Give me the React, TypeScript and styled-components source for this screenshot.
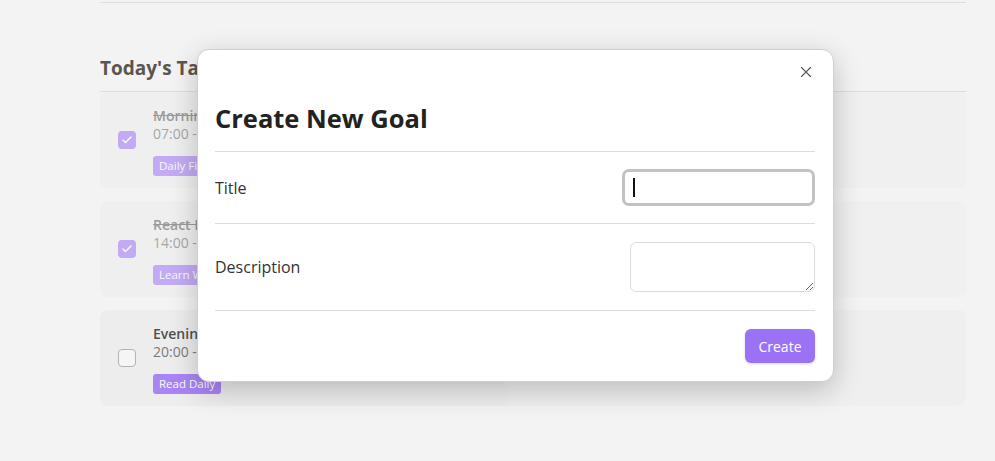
import styled, { createGlobalStyle } from "styled-components";
import { X, Check } from "lucide-react";

const GlobalStyle = createGlobalStyle`
  html, body {
    margin: 0;
    padding: 0;
    background: #f3f3f3;
    font-family: "Open Sans", "Noto Sans", sans-serif;
  }
`;

interface Task {
  title: string;
  time: string;
  tag: string;
  done: boolean;
}

const tasks: Task[] = [
  { title: "Morning Workout", time: "07:00 - 08:00", tag: "Daily Fitness", done: true },
  { title: "React Practice", time: "14:00 - 16:00", tag: "Learn Web Dev", done: true },
  { title: "Evening Reading", time: "20:00 - 21:00", tag: "Read Daily", done: false },
];

const Page = styled.div`
  width: 866px;
  padding-left: 100px;
  padding-top: 2px;
  height: 459px;
  overflow: hidden;
`;

const TopRule = styled.div`
  height: 1px;
  background: #dedede;
`;

const Section = styled.section`
  margin-top: 52px;
`;

const SectionTitle = styled.h2`
  margin: 0;
  padding-bottom: 10px;
  font-size: 19px;
  font-weight: 700;
  color: #5b5550;
  border-bottom: 1px solid #dedede;
`;

const TaskList = styled.ul`
  list-style: none;
  margin: 0;
  padding: 0;
  display: flex;
  flex-direction: column;
  gap: 13px;
`;

const Card = styled.li<{ $done: boolean }>`
  display: flex;
  align-items: center;
  gap: 17px;
  height: 96px;
  box-sizing: border-box;
  padding: 3px 18px 0;
  background: #ededed;
  border-radius: 8px;
  opacity: ${({ $done }) => ($done ? 0.55 : 0.85)};
`;

const Box = styled.span<{ $checked: boolean }>`
  width: 18px;
  height: 18px;
  margin-top: -3px;
  box-sizing: border-box;
  border-radius: 4px;
  display: flex;
  align-items: center;
  justify-content: center;
  color: #fff;
  background: ${({ $checked }) => ($checked ? "#9b72f5" : "#f6f6f6")};
  border: ${({ $checked }) => ($checked ? "none" : "1.5px solid #a9a9a9")};
`;

const TaskBody = styled.div`
  display: flex;
  flex-direction: column;
`;

const TaskTitle = styled.span<{ $done: boolean }>`
  font-size: 14px;
  font-weight: 600;
  line-height: 18px;
  color: ${({ $done }) => ($done ? "#555" : "#333")};
  text-decoration: ${({ $done }) => ($done ? "line-through" : "none")};
`;

const TaskTime = styled.span`
  font-size: 14px;
  line-height: 18px;
  color: #666;
`;

const Tag = styled.span`
  align-self: flex-start;
  margin-top: 13px;
  padding: 0 6px;
  height: 20px;
  line-height: 20px;
  border-radius: 3px;
  font-size: 11.5px;
  color: #fff;
  background: #9b72f5;
`;

const Modal = styled.div`
  position: absolute;
  left: 197px;
  top: 49px;
  width: 637px;
  box-sizing: border-box;
  padding: 0 18px 18px 17px;
  background: #fff;
  border: 1px solid #cfcfcf;
  border-radius: 12px;
  box-shadow: 0 8px 28px rgba(0, 0, 0, 0.22);
`;

const CloseButton = styled.button`
  position: absolute;
  top: 13px;
  right: 18px;
  padding: 0;
  border: none;
  background: none;
  color: #555;
  display: flex;
  cursor: pointer;
`;

const ModalTitle = styled.h1`
  margin: 0;
  padding: 51px 0 16px;
  font-size: 25.5px;
  font-weight: 700;
  line-height: 34px;
  color: #222;
  border-bottom: 1px solid #dedede;
`;

const FieldRow = styled.label<{ $height: number }>`
  display: flex;
  align-items: center;
  justify-content: space-between;
  height: ${({ $height }) => $height}px;
  border-bottom: 1px solid #dedede;
  font-size: 16px;
  color: #333;
`;

const InputWrap = styled.span`
  position: relative;
  display: flex;
`;

const TextInput = styled.input`
  width: 193px;
  height: 37px;
  box-sizing: border-box;
  border: 3px solid #c2c2c2;
  border-radius: 7px;
  padding: 0 8px;
  font: inherit;
  caret-color: transparent;
  outline: none;
`;

const Caret = styled.span`
  position: absolute;
  left: 11px;
  top: 9px;
  width: 2px;
  height: 19px;
  background: #111;
`;

const TextArea = styled.textarea`
  width: 185px;
  height: 50px;
  box-sizing: border-box;
  border: 1px solid #dcdcdc;
  border-radius: 6px;
  font: inherit;
  outline: none;
`;

const Footer = styled.div`
  display: flex;
  justify-content: flex-end;
  padding-top: 18px;
`;

const CreateButton = styled.button`
  width: 70px;
  height: 34px;
  border: none;
  border-radius: 6px;
  background: #9b72f5;
  color: #fff;
  font-family: inherit;
  font-size: 14px;
  box-shadow: 0 1px 3px rgba(0, 0, 0, 0.15);
  cursor: pointer;
`;

export default function App() {
  return (
    <>
      <GlobalStyle />
      <Page>
        <TopRule />
        <Section>
          <SectionTitle>Today's Tasks</SectionTitle>
          <TaskList>
            {tasks.map((t) => (
              <Card key={t.title} $done={t.done}>
                <Box $checked={t.done}>{t.done && <Check size={12} strokeWidth={3} />}</Box>
                <TaskBody>
                  <TaskTitle $done={t.done}>{t.title}</TaskTitle>
                  <TaskTime>{t.time}</TaskTime>
                  <Tag>{t.tag}</Tag>
                </TaskBody>
              </Card>
            ))}
          </TaskList>
        </Section>
      </Page>

      <Modal>
        <CloseButton aria-label="Close">
          <X size={18} strokeWidth={1.5} />
        </CloseButton>
        <ModalTitle>Create New Goal</ModalTitle>
        <FieldRow $height={71}>
          Title
          <InputWrap>
            <TextInput />
            <Caret />
          </InputWrap>
        </FieldRow>
        <FieldRow $height={86}>
          Description
          <TextArea />
        </FieldRow>
        <Footer>
          <CreateButton>Create</CreateButton>
        </Footer>
      </Modal>
    </>
  );
}
